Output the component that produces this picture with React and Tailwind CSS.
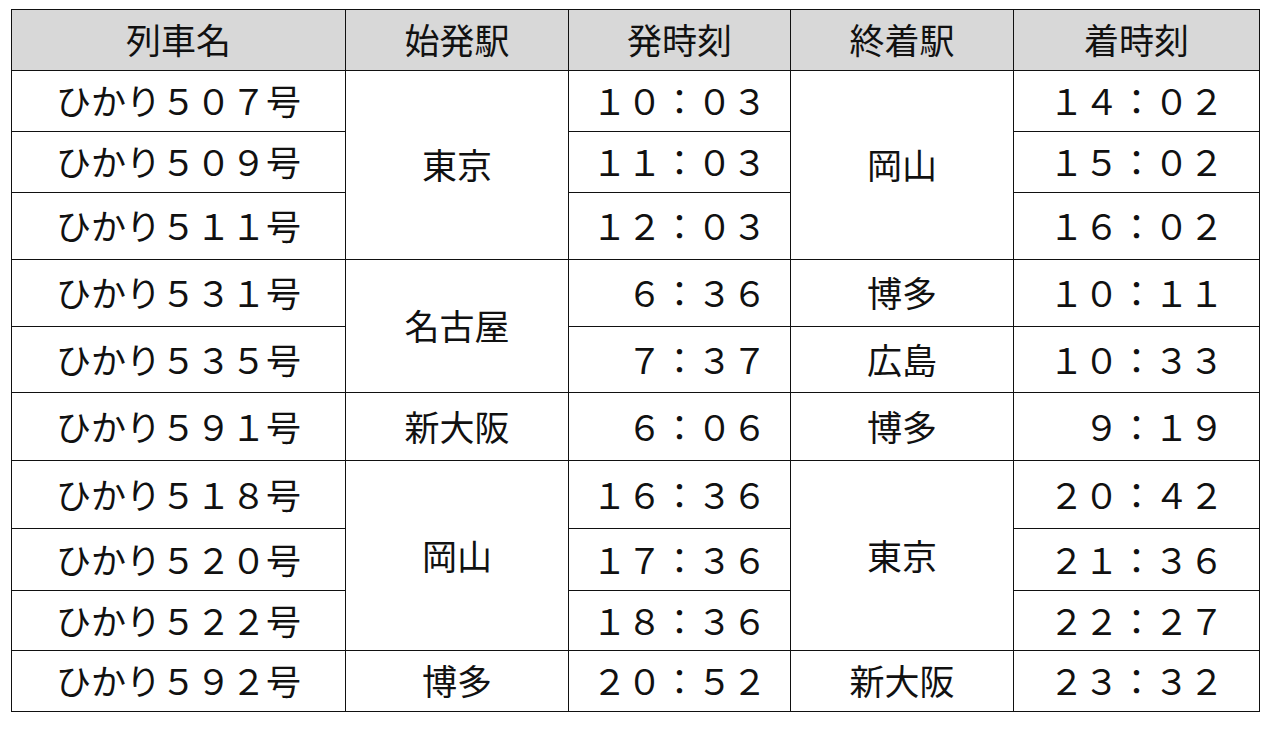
const rows = [
  { name: 'ひかり５０７号', from: { text: '東京', span: 3 }, dep: '１０：０３', to: { text: '岡山', span: 3 }, arr: '１４：０２', h: 'h-[61px]' },
  { name: 'ひかり５０９号', dep: '１１：０３', arr: '１５：０２', h: 'h-[61px]' },
  { name: 'ひかり５１１号', dep: '１２：０３', arr: '１６：０２', h: 'h-[67px]' },
  { name: 'ひかり５３１号', from: { text: '名古屋', span: 2 }, dep: '　６：３６', to: { text: '博多', span: 1 }, arr: '１０：１１', h: 'h-[67px]' },
  { name: 'ひかり５３５号', dep: '　７：３７', to: { text: '広島', span: 1 }, arr: '１０：３３', h: 'h-[66px]' },
  { name: 'ひかり５９１号', from: { text: '新大阪', span: 1 }, dep: '　６：０６', to: { text: '博多', span: 1 }, arr: '　９：１９', h: 'h-[68px]' },
  { name: 'ひかり５１８号', from: { text: '岡山', span: 3 }, dep: '１６：３６', to: { text: '東京', span: 3 }, arr: '２０：４２', h: 'h-[68px]' },
  { name: 'ひかり５２０号', dep: '１７：３６', arr: '２１：３６', h: 'h-[62px]' },
  { name: 'ひかり５２２号', dep: '１８：３６', arr: '２２：２７', h: 'h-[60px]' },
  { name: 'ひかり５９２号', from: { text: '博多', span: 1 }, dep: '２０：５２', to: { text: '新大阪', span: 1 }, arr: '２３：３２', h: 'h-[61px]' },
];

const headers = ['列車名', '始発駅', '発時刻', '終着駅', '着時刻'];

export default function App() {
  return (
    <div className="min-h-screen bg-white pl-[11px] pt-[9px] font-['Noto_Sans_CJK_JP','Noto_Sans',sans-serif] text-[#111]">
      <table className="w-[1248px] table-fixed border-collapse text-[35px] leading-none">
        <colgroup>
          <col className="w-[334px]" />
          <col className="w-[223px]" />
          <col className="w-[222px]" />
          <col className="w-[223px]" />
          <col className="w-[246px]" />
        </colgroup>
        <thead>
          <tr className="h-[61px] bg-[#d8d8d8]">
            {headers.map((h) => (
              <th key={h} className="border border-[#111] p-0 pb-[3px] text-center font-normal">
                {h}
              </th>
            ))}
          </tr>
        </thead>
        <tbody>
          {rows.map((r) => (
            <tr key={r.name} className={r.h}>
              <td className="border border-[#111] p-0 pb-[3px] text-center whitespace-pre">{r.name}</td>
              {r.from && (
                <td rowSpan={r.from.span} className="border border-[#111] p-0 pb-[3px] text-center">
                  {r.from.text}
                </td>
              )}
              <td className="border border-[#111] p-0 pb-[3px] text-center whitespace-pre">{r.dep}</td>
              {r.to && (
                <td rowSpan={r.to.span} className="border border-[#111] p-0 pb-[3px] text-center">
                  {r.to.text}
                </td>
              )}
              <td className="border border-[#111] p-0 pb-[3px] text-center whitespace-pre">{r.arr}</td>
            </tr>
          ))}
        </tbody>
      </table>
    </div>
  );
}
